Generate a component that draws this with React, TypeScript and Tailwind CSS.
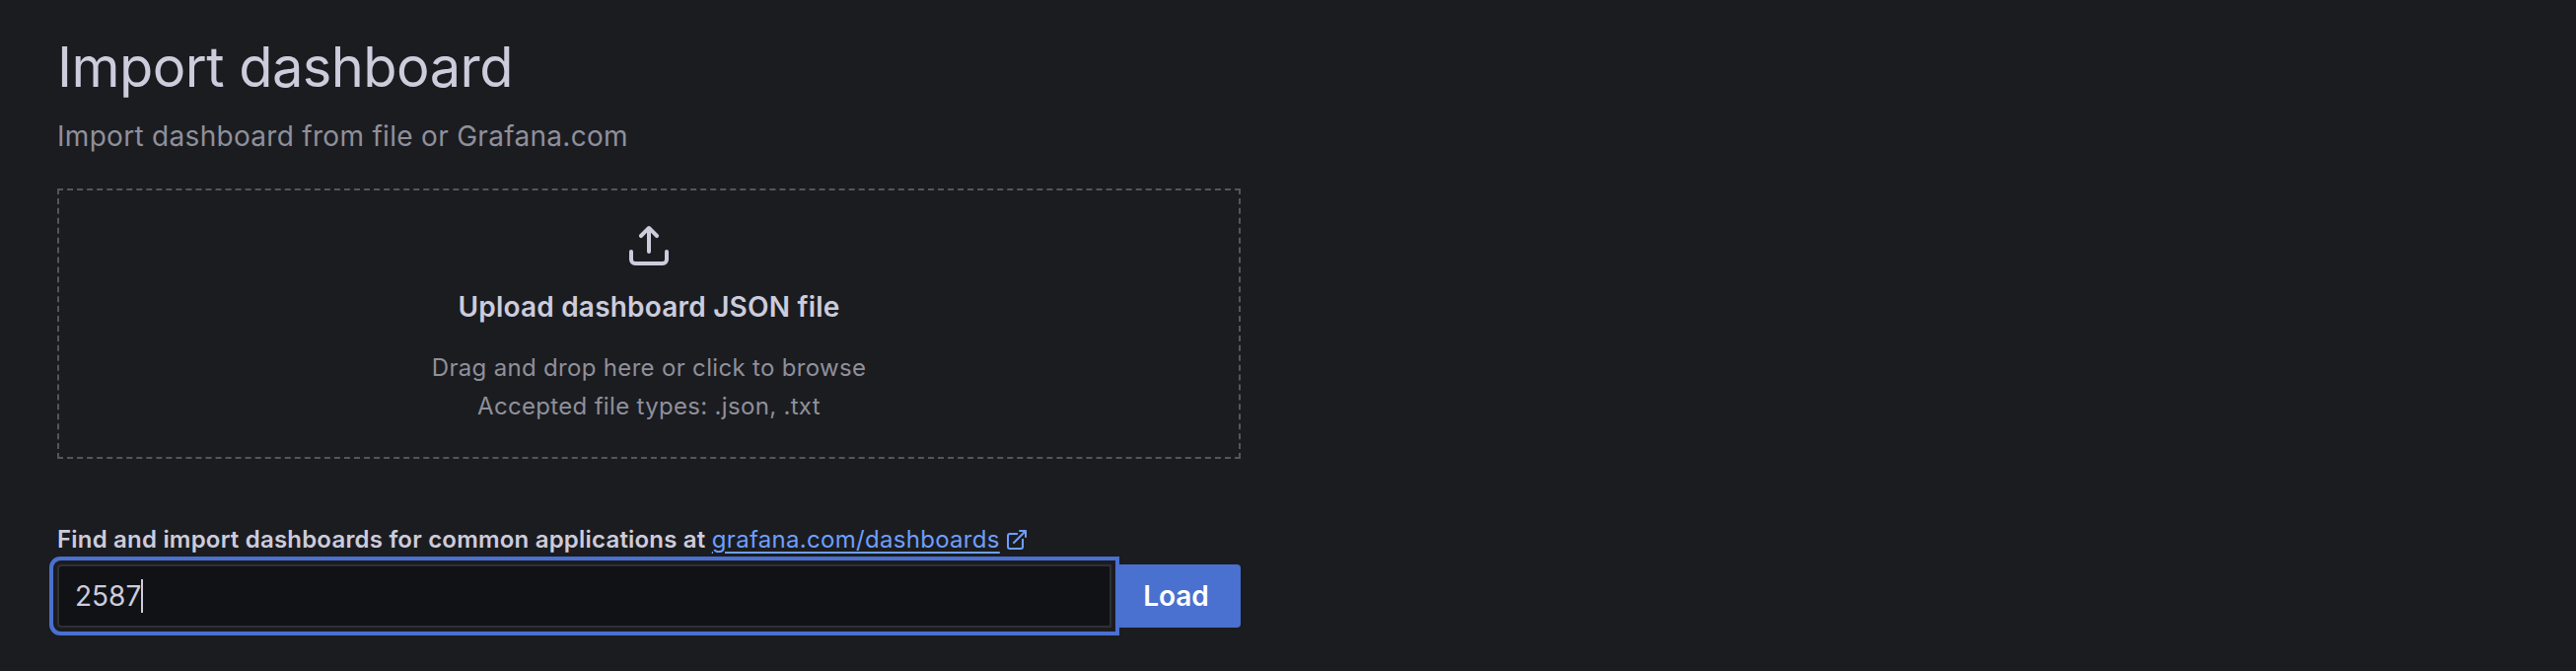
import React from 'react';

const inter = "font-['Inter',sans-serif]";

const UploadIcon = () => (
  <svg viewBox="0 0 24 24" className="w-12 h-12 fill-[#ccccdc]">
    <path d="M8.71,7.71,11,5.41V15a1,1,0,0,0,2,0V5.41l2.29,2.3a1,1,0,0,0,1.42,0,1,1,0,0,0,0-1.42l-4-4a1,1,0,0,0-.33-.21,1,1,0,0,0-.76,0,1,1,0,0,0-.33.21l-4,4A1,1,0,1,0,8.71,7.71ZM21,14a1,1,0,0,0-1,1v4a1,1,0,0,1-1,1H5a1,1,0,0,1-1-1V15a1,1,0,0,0-2,0v4a3,3,0,0,0,3,3H19a3,3,0,0,0,3-3V15A1,1,0,0,0,21,14Z" />
  </svg>
);

const ExternalIcon = () => (
  <svg viewBox="0 0 24 24" className="w-6 h-6 fill-[#6e9fff]">
    <path d="M18,10.82a1,1,0,0,0-1,1V19a1,1,0,0,1-1,1H5a1,1,0,0,1-1-1V8A1,1,0,0,1,5,7h7.18a1,1,0,0,0,0-2H5A3,3,0,0,0,2,8V19a3,3,0,0,0,3,3H16a3,3,0,0,0,3-3V11.82A1,1,0,0,0,18,10.82Zm3.92-8.2a1,1,0,0,0-.54-.54A1,1,0,0,0,21,2H15a1,1,0,0,0,0,2h3.59L8.29,14.29a1,1,0,0,0,0,1.42,1,1,0,0,0,1.42,0L20,5.41V9a1,1,0,0,0,2,0V3A1,1,0,0,0,21.92,2.62Z" />
  </svg>
);

export default function App() {
  return (
    <div className={`${inter} h-[680px] w-full overflow-hidden bg-[#1b1c20] pl-[58px] pt-[32px] text-[#ccccdc]`}>
      <div className="w-[1200px]">
        <h1 className="text-[56px] leading-[72px] font-normal tracking-[-0.55px]">Import dashboard</h1>
        <p className="mt-[14px] text-[28px] leading-[40px] tracking-[0.3px] text-[#8f909b]">Import dashboard from file or Grafana.com</p>

        <div className="mt-[33px] flex h-[274px] flex-col items-center border-2 border-dashed border-[#55565b] pt-[32px]">
          <UploadIcon />
          <div className="mt-[18px] text-[28px] leading-[40px] font-semibold tracking-[0.2px]">Upload dashboard JSON file</div>
          <div className="mt-[22px] text-center text-[24px] leading-[39px] tracking-[0.32px] text-[#8f909b]">
            <div>Drag and drop here or click to browse</div>
            <div>Accepted file types: .json, .txt</div>
          </div>
        </div>

        <div className="mt-[64px] flex items-center gap-[5px] text-[24px] leading-[36px] font-semibold tracking-[0.2px]">
          <span>
            Find and import dashboards for common applications at{' '}
            <a className="font-normal tracking-[0.3px] text-[#6e9fff] underline underline-offset-[4px]">grafana.com/dashboards</a>
          </span>
          <ExternalIcon />
        </div>

        <div className="mt-[7px] flex h-[64px]">
          <div className="relative z-10 flex flex-1 items-center rounded-l-[4px] border-2 border-[#2f3036] bg-[#111216] pl-[16px] shadow-[0_0_0_4px_#1b1c20,0_0_0_8px_#4a70d0]">
            <span className="text-[28px] leading-[40px]">2587</span>
            <span className="h-[34px] w-[2px] bg-[#ccccdc]" />
          </div>
          <button className="w-[131px] rounded-r-[4px] bg-[#4a70d0] text-[28px] font-semibold text-white">Load</button>
        </div>
      </div>
    </div>
  );
}
